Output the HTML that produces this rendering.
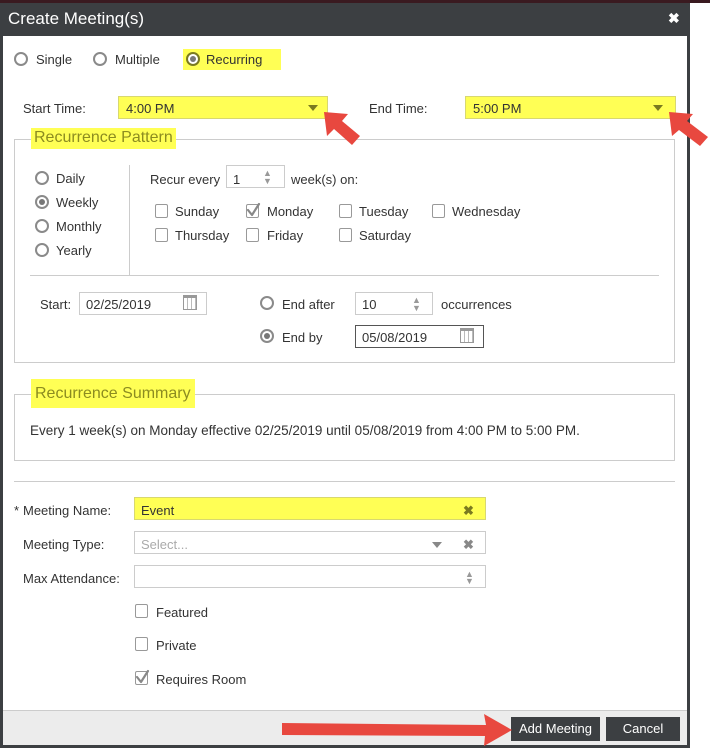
<!DOCTYPE html>
<html><head><meta charset="utf-8"><style>
*{margin:0;padding:0;box-sizing:border-box}
body{width:710px;height:751px;position:relative;background:#fff;font-family:"Liberation Sans",sans-serif;font-size:13px;color:#333;overflow:hidden}
.a{position:absolute;white-space:nowrap}
.t{line-height:16px;margin-top:1px}
.rad{position:absolute;width:14px;height:14px;border:2px solid #8a8a8a;border-radius:50%;background:#fff}
.rad.on::after{content:"";position:absolute;left:2px;top:2px;width:6px;height:6px;border-radius:50%;background:#777}
.cb{position:absolute;width:13px;height:14px;border:1.5px solid #999;border-radius:2px;background:#fff}
.box{position:absolute;border:1px solid #ccc;background:#fff;height:23px}
.yel{background:#ffff55;border-color:#d8d870}
.tri{position:absolute;width:0;height:0;border-left:5px solid transparent;border-right:5px solid transparent;border-top:6px solid #7a7a20}
.legend{position:absolute;background:#ffff55;color:#8c8c20;font-size:16px;line-height:20px;padding:0 3px}
.fs{position:absolute;border:1px solid #ccc}
.cal{position:absolute;width:14px;height:15px;border:1px solid #999;border-top:3px solid #999;background:repeating-linear-gradient(90deg,#fff 0 3px,#bbb 3px 4px)}
</style></head><body>
<div class="a" style="left:0;top:0;width:710px;height:3px;background:#3a1a20"></div>
<div class="a" style="left:0;top:3px;width:690px;height:745px;background:#3c3f42"></div>
<div class="a" style="left:3px;top:36px;width:684px;height:709px;background:#fff"></div>
<div class="a" style="left:8px;top:9px;color:#fff;font-size:17px;line-height:20px">Create Meeting(s)</div>
<div class="a" style="left:668px;top:10px;color:#fff;font-size:14px;font-weight:bold;line-height:16px">✖</div>

<div class="rad" style="left:14px;top:52px"></div><div class="a t" style="left:36px;top:51px">Single</div>
<div class="rad" style="left:93px;top:52px"></div><div class="a t" style="left:115px;top:51px">Multiple</div>
<div class="a" style="left:183px;top:49px;width:98px;height:21px;background:#ffff55"></div>
<div class="rad on" style="left:186px;top:52px;border-color:#7a7a20"></div><div class="a t" style="left:206px;top:51px">Recurring</div>

<div class="a t" style="left:23px;top:100px">Start Time:</div>
<div class="box yel" style="left:118px;top:96px;width:210px"></div>
<div class="a t" style="left:126px;top:100px">4:00 PM</div>
<div class="tri" style="left:308px;top:105px"></div>
<div class="a t" style="left:369px;top:100px">End Time:</div>
<div class="box yel" style="left:465px;top:96px;width:211px"></div>
<div class="a t" style="left:473px;top:100px">5:00 PM</div>
<div class="tri" style="left:653px;top:105px"></div>

<div class="fs" style="left:14px;top:139px;width:661px;height:224px"></div>
<div class="legend" style="left:31px;top:128px;height:21px">Recurrence Pattern</div>
<div class="rad" style="left:35px;top:171px"></div><div class="a t" style="left:56px;top:170px">Daily</div>
<div class="rad on" style="left:35px;top:195px"></div><div class="a t" style="left:56px;top:194px">Weekly</div>
<div class="rad" style="left:35px;top:219px"></div><div class="a t" style="left:56px;top:218px">Monthly</div>
<div class="rad" style="left:35px;top:243px"></div><div class="a t" style="left:56px;top:242px">Yearly</div>
<div class="a" style="left:129px;top:165px;width:1px;height:110px;background:#ccc"></div>
<div class="a t" style="left:150px;top:171px">Recur every</div>
<div class="box" style="left:226px;top:165px;width:59px"></div>
<div class="a t" style="left:233px;top:171px">1</div>
<div class="a" style="left:263px;top:169px;color:#999;font-size:9px;line-height:8px">▲<br>▼</div>
<div class="a t" style="left:291px;top:171px">week(s) on:</div>
<div class="cb" style="left:155px;top:204px"></div><div class="a t" style="left:175px;top:203px">Sunday</div>
<div class="cb" style="left:246px;top:204px"></div><div class="a t" style="left:267px;top:203px">Monday</div>
<div class="cb" style="left:339px;top:204px"></div><div class="a t" style="left:359px;top:203px">Tuesday</div>
<div class="cb" style="left:432px;top:204px"></div><div class="a t" style="left:452px;top:203px">Wednesday</div>
<div class="cb" style="left:155px;top:228px"></div><div class="a t" style="left:175px;top:227px">Thursday</div>
<div class="cb" style="left:246px;top:228px"></div><div class="a t" style="left:267px;top:227px">Friday</div>
<div class="cb" style="left:339px;top:228px"></div><div class="a t" style="left:359px;top:227px">Saturday</div>
<div class="a" style="left:30px;top:275px;width:629px;height:1px;background:#ccc"></div>

<div class="a t" style="left:40px;top:296px">Start:</div>
<div class="box" style="left:79px;top:292px;width:128px"></div>
<div class="a t" style="left:86px;top:296px">02/25/2019</div>
<div class="cal" style="left:183px;top:295px"></div>
<div class="rad" style="left:260px;top:296px"></div><div class="a t" style="left:282px;top:296px">End after</div>
<div class="box" style="left:355px;top:292px;width:78px"></div>
<div class="a t" style="left:362px;top:296px">10</div>
<div class="a" style="left:412px;top:296px;color:#999;font-size:9px;line-height:8px">▲<br>▼</div>
<div class="a t" style="left:441px;top:296px">occurrences</div>
<div class="rad on" style="left:260px;top:329px"></div><div class="a t" style="left:282px;top:329px">End by</div>
<div class="box" style="left:355px;top:325px;width:129px;border-color:#555"></div>
<div class="a t" style="left:362px;top:329px">05/08/2019</div>
<div class="cal" style="left:460px;top:328px"></div>

<div class="fs" style="left:14px;top:394px;width:661px;height:67px"></div>
<div class="legend" style="left:31px;top:379px;height:29px;line-height:29px;padding:0 4px">Recurrence Summary</div>
<div class="a t" style="left:30px;top:422px;font-size:13.5px">Every 1 week(s) on Monday effective 02/25/2019 until 05/08/2019 from 4:00 PM to 5:00 PM.</div>
<div class="a" style="left:14px;top:481px;width:661px;height:1px;background:#ccc"></div>

<div class="a t" style="left:14px;top:502px">*</div><div class="a t" style="left:23px;top:502px">Meeting Name:</div>
<div class="box yel" style="left:134px;top:497px;width:352px"></div>
<div class="a t" style="left:141px;top:502px">Event</div>
<div class="a t" style="left:463px;top:502px;color:#7a7a20;font-weight:bold">✖</div>
<div class="a t" style="left:23px;top:536px">Meeting Type:</div>
<div class="box" style="left:134px;top:531px;width:352px"></div>
<div class="a t" style="left:141px;top:536px;color:#aaa">Select...</div>
<div class="tri" style="left:432px;top:542px;border-top-color:#888"></div>
<div class="a t" style="left:463px;top:536px;color:#888;font-weight:bold">✖</div>
<div class="a t" style="left:23px;top:570px">Max Attendance:</div>
<div class="box" style="left:134px;top:565px;width:352px"></div>
<div class="a" style="left:465px;top:571px;color:#999;font-size:9px;line-height:7px">▲<br>▼</div>
<div class="cb" style="left:135px;top:604px"></div><div class="a t" style="left:156px;top:604px">Featured</div>
<div class="cb" style="left:135px;top:637px"></div><div class="a t" style="left:156px;top:637px">Private</div>
<div class="cb" style="left:135px;top:671px"></div><div class="a t" style="left:156px;top:671px">Requires Room</div>

<div class="a" style="left:3px;top:710px;width:684px;height:35px;background:#ececec;border-top:1px solid #ccc"></div>
<div class="a" style="left:511px;top:717px;width:89px;height:24px;background:#3c3f42;color:#fff;text-align:center;line-height:24px">Add Meeting</div>
<div class="a" style="left:606px;top:717px;width:74px;height:24px;background:#3c3f42;color:#fff;text-align:center;line-height:24px">Cancel</div>

<svg class="a" style="left:0;top:0" width="710" height="751">
<g fill="none" stroke="#888" stroke-width="2.2" stroke-linecap="round" stroke-linejoin="round">
<path d="M248,210 L252,215 L259,204"/>
<path d="M137,677 L141,682 L148,671"/>
</g>
<g fill="#e8483f">
<path d="M324,112 L348,114 L342,121 L360,136 L352,145 L334,129 L327,136 Z"/>
<path d="M669,112 L693,114 L687,121 L708,137 L700,146 L679,130 L672,136 Z"/>
<path d="M282,723 L486,725 L484,714 L512,730 L484,746 L485,736 L282,735 Z"/>
</g></svg>
</body></html>
